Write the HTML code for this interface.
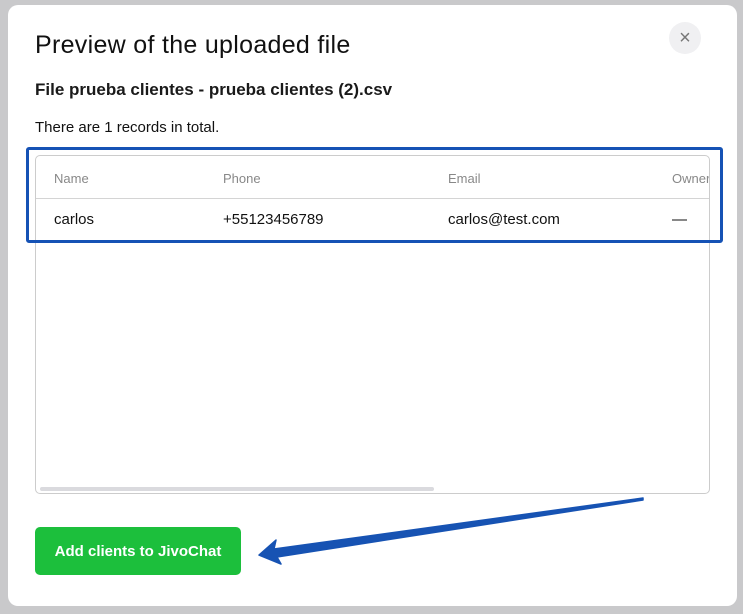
<!DOCTYPE html><html><head><style>
body{margin:0;width:743px;height:614px;background:#c9c9cb;font-family:"Liberation Sans",sans-serif;position:relative;overflow:hidden}
.m{position:absolute;left:8px;top:5px;width:729px;height:601px;background:#fff;border-radius:10px}
.a{position:absolute;white-space:nowrap;color:#111}
</style></head><body>
<div class="m"></div>
<div class="a" style="left:35px;top:31px;font-size:25px;letter-spacing:0.3px">Preview of the uploaded file</div>
<div style="position:absolute;left:669px;top:22px;width:32px;height:32px;border-radius:50%;background:#f0f0f2;color:#777;font-size:20px;text-align:center;line-height:32px">×</div>
<div class="a" style="left:35px;top:80px;font-size:17px;font-weight:bold;color:#1a1a1a">File prueba clientes - prueba clientes (2).csv</div>
<div class="a" style="left:35px;top:119px;font-size:15px">There are 1 records in total.</div>
<div style="position:absolute;left:35px;top:155px;width:673px;height:337px;border:1px solid #ccc;border-radius:5px;overflow:hidden">
<div style="position:absolute;left:0;top:42px;width:100%;border-top:1px solid #d4d4d4"></div>
<div style="position:absolute;left:4px;bottom:2px;width:394px;height:4px;background:#dadade;border-radius:2px"></div>
</div>
<div class="a" style="left:54px;top:171px;font-size:13px;color:#888">Name</div>
<div class="a" style="left:223px;top:171px;font-size:13px;color:#888">Phone</div>
<div class="a" style="left:448px;top:171px;font-size:13px;color:#888">Email</div>
<div class="a" style="left:672px;top:171px;font-size:13px;color:#888;width:37px;overflow:hidden">Owner</div>
<div class="a" style="left:54px;top:211px;font-size:15px">carlos</div>
<div class="a" style="left:223px;top:211px;font-size:15px">+55123456789</div>
<div class="a" style="left:448px;top:211px;font-size:15px">carlos@test.com</div>
<div class="a" style="left:672px;top:211px;font-size:15px">—</div>
<div style="position:absolute;left:26px;top:147px;width:691px;height:90px;border:3px solid #1552b5;border-radius:3px"></div>
<div style="position:absolute;left:35px;top:527px;width:206px;height:48px;background:#1cbf3c;border-radius:5px;color:#fff;font-size:15px;font-weight:bold;text-align:center;line-height:50px">Add clients to JivoChat</div>
<svg style="position:absolute;left:0;top:0" width="743" height="614"><path d="M643 498 L643 500 L277 557 L281 564 L259 555 L276 540 L274 549 Z" fill="#1753b3" stroke="#1753b3" stroke-width="1.5" stroke-linejoin="round"/></svg>
</body></html>
